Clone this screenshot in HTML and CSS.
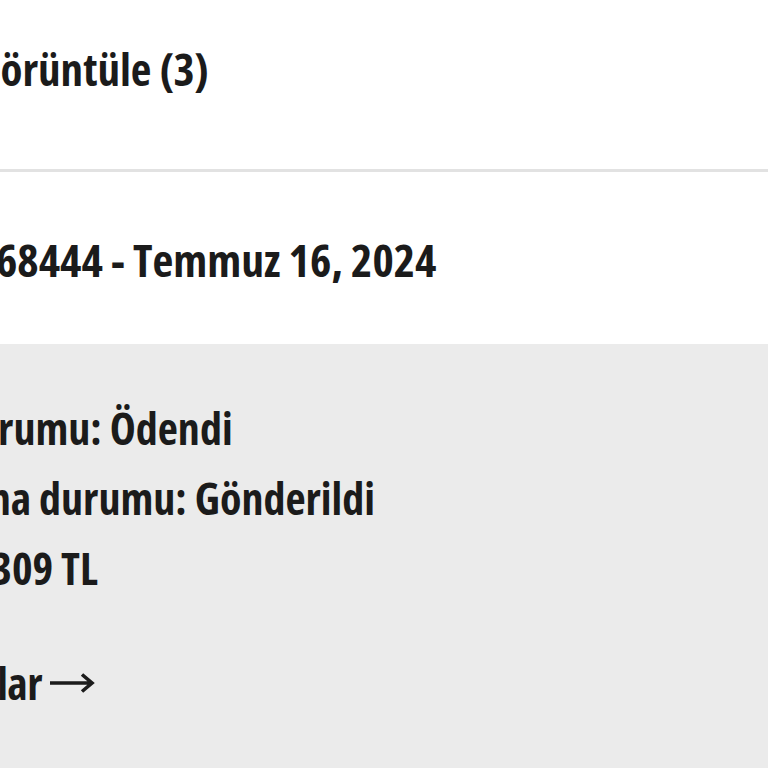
FILE: index.html
```html
<!DOCTYPE html>
<html lang="tr">
<head>
  <meta charset="UTF-8" />
  <meta name="viewport" content="width=device-width, initial-scale=1.0"/>
  <title>Siparişlerim</title>
  <link rel="stylesheet" href="styles.css">
</head>
<body>
  <header class="view-bar">
    <a href="#" class="view-link">Siparişleri Görüntüle (3)</a>
  </header>

  <section class="order">
    <div class="order-head">
      <h2>Sipariş #1768444 - Temmuz 16, 2024</h2>
    </div>
    <div class="order-body">
      <p>Ödeme durumu: Ödendi</p>
      <p>Kargolanma durumu: Gönderildi</p>
      <p>Toplam: 1309 TL</p>
      <a href="#" class="details">Tüm detaylar
        <svg class="arrow" width="46" height="24" viewBox="0 0 46 24"><path d="M1 12H43M33 3.5L43 12L33 20.5" fill="none" stroke="#1b1b1b" stroke-width="3.6"/></svg>
      </a>
    </div>
  </section>
</body>
</html>
```
FILE: styles.css
```css
* {
  box-sizing: border-box;
}

body {
  margin: 0;
  font-family: 'Open Sans', sans-serif;
  font-stretch: 75%;
  font-weight: 700;
  font-size: 45px;
  color: #1b1b1b;
  overflow: hidden;
}

/* top bar: list link */
.view-bar {
  height: 172px;
  padding-top: 34px;
  margin-left: -209px;
  border-bottom: 3px solid #e2e2e2;
}

.view-link {
  display: block;
  line-height: 70px;
  color: inherit;
  text-decoration: none;
}

/* order card */
.order-head {
  height: 172px;
  padding-top: 52px;
  margin-left: -197px;
}

h2 {
  margin: 0;
  font-size: 45.5px;
  line-height: 70px;
  font-weight: 700;
  white-space: nowrap;
}

.order-body {
  background: #ebebeb;
  padding: 49px 0 80px;
  margin-left: -175px;
  font-size: 44px;
  white-space: nowrap;
}

.order-body p {
  margin: 0;
  line-height: 70px;
}

.details {
  display: inline-flex;
  align-items: center;
  gap: 7px;
  margin-top: 45px;
  line-height: 70px;
  letter-spacing: -0.6px;
  color: inherit;
  text-decoration: none;
}
```
